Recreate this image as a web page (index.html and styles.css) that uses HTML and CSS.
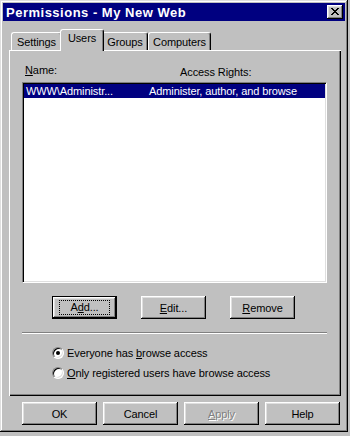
FILE: index.html
```html
<!DOCTYPE html>
<html lang="en">
<head>
  <meta charset="UTF-8" />
  <meta name="viewport" content="width=device-width, initial-scale=1.0" />
  <title>Permissions - My New Web</title>
  <link rel="stylesheet" href="styles.css">
</head>
<body>
  <div class="window">
    <div class="titlebar">
      <span class="title">Permissions - My New Web</span>
      <button class="close-btn" aria-label="Close">
        <svg width="8" height="7" viewBox="0 0 8 7">
          <path d="M0 0h2v1h-2zM6 0h2v1h-2zM1 1h2v1h-2zM5 1h2v1h-2zM2 2h4v1h-4zM3 3h2v1h-2zM2 4h4v1h-4zM1 5h2v1h-2zM5 5h2v1h-2zM0 6h2v1h-2zM6 6h2v1h-2z" fill="#000"/>
        </svg>
      </button>
    </div>

    <div class="dialog">
      <div class="tabs">
        <div class="tab tab-settings">Settings</div>
        <div class="tab tab-users active">Users</div>
        <div class="tab tab-groups">Groups</div>
        <div class="tab tab-computers">Computers</div>
      </div>

      <div class="panel">
        <div class="list-head">
          <span class="col-name"><u>N</u>ame:</span>
          <span class="col-rights">Access Rights:</span>
        </div>
        <div class="list">
          <div class="row selected">
            <span class="cell-name">WWW\Administr...</span>
            <span class="cell-rights">Administer, author, and browse</span>
          </div>
        </div>

        <div class="actions">
          <button class="btn default"><span class="focus">A<u>d</u>d...</span></button>
          <button class="btn"><span><u>E</u>dit...</span></button>
          <button class="btn"><span><u>R</u>emove</span></button>
        </div>

        <div class="separator"></div>

        <div class="options">
          <label class="option"><span class="radio checked"></span><span>Everyone has <u>b</u>rowse access</span></label>
          <label class="option"><span class="radio"></span><span><u>O</u>nly registered users have browse access</span></label>
        </div>
      </div>

      <div class="footer">
        <button class="btn wide">OK</button>
        <button class="btn wide">Cancel</button>
        <button class="btn wide disabled"><span><u>A</u>pply</span></button>
        <button class="btn wide">Help</button>
      </div>
    </div>
  </div>
</body>
</html>
```

FILE: styles.css
```css
* {
  margin: 0;
  padding: 0;
  box-sizing: border-box;
}

body {
  width: 350px;
  height: 436px;
  overflow: hidden;
  background: #c0c0c0;
  font-family: 'Liberation Sans', Arial, sans-serif;
  font-size: 11px;
  letter-spacing: -0.1px;
  color: #000;
}

.window {
  width: 348px;
  height: 432px;
  padding: 3px;
  background: #c0c0c0;
  box-shadow: inset -1px -1px #000, inset 1px 1px #dfdfdf, inset -2px -2px #808080, inset 2px 2px #fff;
}

.titlebar {
  height: 18px;
  background: #000080;
  color: #fff;
  display: flex;
  align-items: center;
  justify-content: space-between;
  padding: 0 2px 0 3px;
}

.title {
  font-weight: bold;
  font-size: 13px;
  letter-spacing: 0.5px;
}

.close-btn {
  width: 16px;
  height: 14px;
  background: #c0c0c0;
  border: none;
  box-shadow: inset -1px -1px #000, inset 1px 1px #fff, inset -2px -2px #808080, inset 2px 2px #dfdfdf;
  display: flex;
  align-items: center;
  justify-content: center;
  padding-bottom: 1px;
}

.dialog {
  padding: 0 5px 0 6px;
}

/* tabs */
.tabs {
  display: flex;
  align-items: flex-end;
  height: 21px;
  margin-top: 8px;
  padding-left: 2px;
}

.tab {
  height: 18px;
  border: 1px solid;
  border-color: #fff #000 transparent #fff;
  border-bottom: none;
  border-radius: 3px 3px 0 0;
  box-shadow: inset -1px 0 #808080;
  text-align: center;
  line-height: 16px;
  padding-top: 1px;
}

.tab-settings { width: 51px; }
.tab-users { width: 40px; }
.tab-groups { width: 46px; }
.tab-computers { width: 63px; }

.tab.active {
  position: relative;
  z-index: 1;
  height: 22px;
  width: 44px;
  margin: 0 -2px -1px;
  background: #c0c0c0;
  padding-top: 0;
}

.panel {
  width: 332px;
  height: 346px;
  box-shadow: inset 1px 1px #fff, inset -1px -1px #000, inset -2px -2px #808080;
  padding: 14px 14px 0 13px;
}

.list-head {
  display: flex;
  height: 13px;
  line-height: 13px;
  padding-left: 3px;
}

.col-name { width: 155px; }
.col-rights { padding-top: 2px; }

.list {
  margin-top: 5px;
  height: 201px;
  background: #fff;
  border: 1px solid;
  border-color: #808080 #fff #fff #808080;
  box-shadow: inset 1px 1px #000, inset -1px -1px #dfdfdf;
  padding: 1px;
}

.row {
  display: flex;
  height: 14px;
  line-height: 14px;
  padding-left: 2px;
}

.row.selected {
  background: #000080;
  color: #fff;
}

.cell-name { width: 123px; }

/* buttons */
.btn {
  font-family: inherit;
  font-size: 11px;
  letter-spacing: inherit;
  color: #000;
  background: #c0c0c0;
  border: none;
  height: 23px;
  box-shadow: inset -1px -1px #000, inset 1px 1px #fff, inset -2px -2px #808080, inset 2px 2px #dfdfdf;
  display: flex;
  align-items: center;
  justify-content: center;
}

.actions {
  display: flex;
  gap: 24px;
  margin-top: 13px;
  padding-left: 30px;
}

.actions .btn {
  width: 65px;
}

.btn.default {
  border: 1px solid #000;
}

.focus {
  border: 1px dotted #000;
  width: 51px;
  height: 15px;
  line-height: 13px;
  text-align: center;
}

.separator {
  margin-top: 13px;
  height: 2px;
  border-top: 1px solid #808080;
  border-bottom: 1px solid #fff;
}

.options {
  margin-top: 9px;
  padding-left: 30px;
}

.option {
  display: flex;
  align-items: center;
  height: 20px;
}

.radio {
  width: 12px;
  height: 12px;
  border-radius: 50%;
  border: 1px solid;
  border-color: #808080 #fff #fff #808080;
  box-shadow: inset 1px 1px #000, inset -1px -1px #dfdfdf;
  background: #fff;
  margin-right: 3px;
  display: flex;
  align-items: center;
  justify-content: center;
}

.radio.checked::after {
  content: '';
  width: 4px;
  height: 4px;
  border-radius: 50%;
  background: #000;
}

.footer {
  display: flex;
  justify-content: flex-end;
  gap: 6px;
  margin-top: 6px;
  width: 332px;
  padding-right: 1px;
}

.btn.wide {
  width: 75px;
}

.btn.disabled {
  color: #808080;
  text-shadow: 1px 1px #fff;
}
```
